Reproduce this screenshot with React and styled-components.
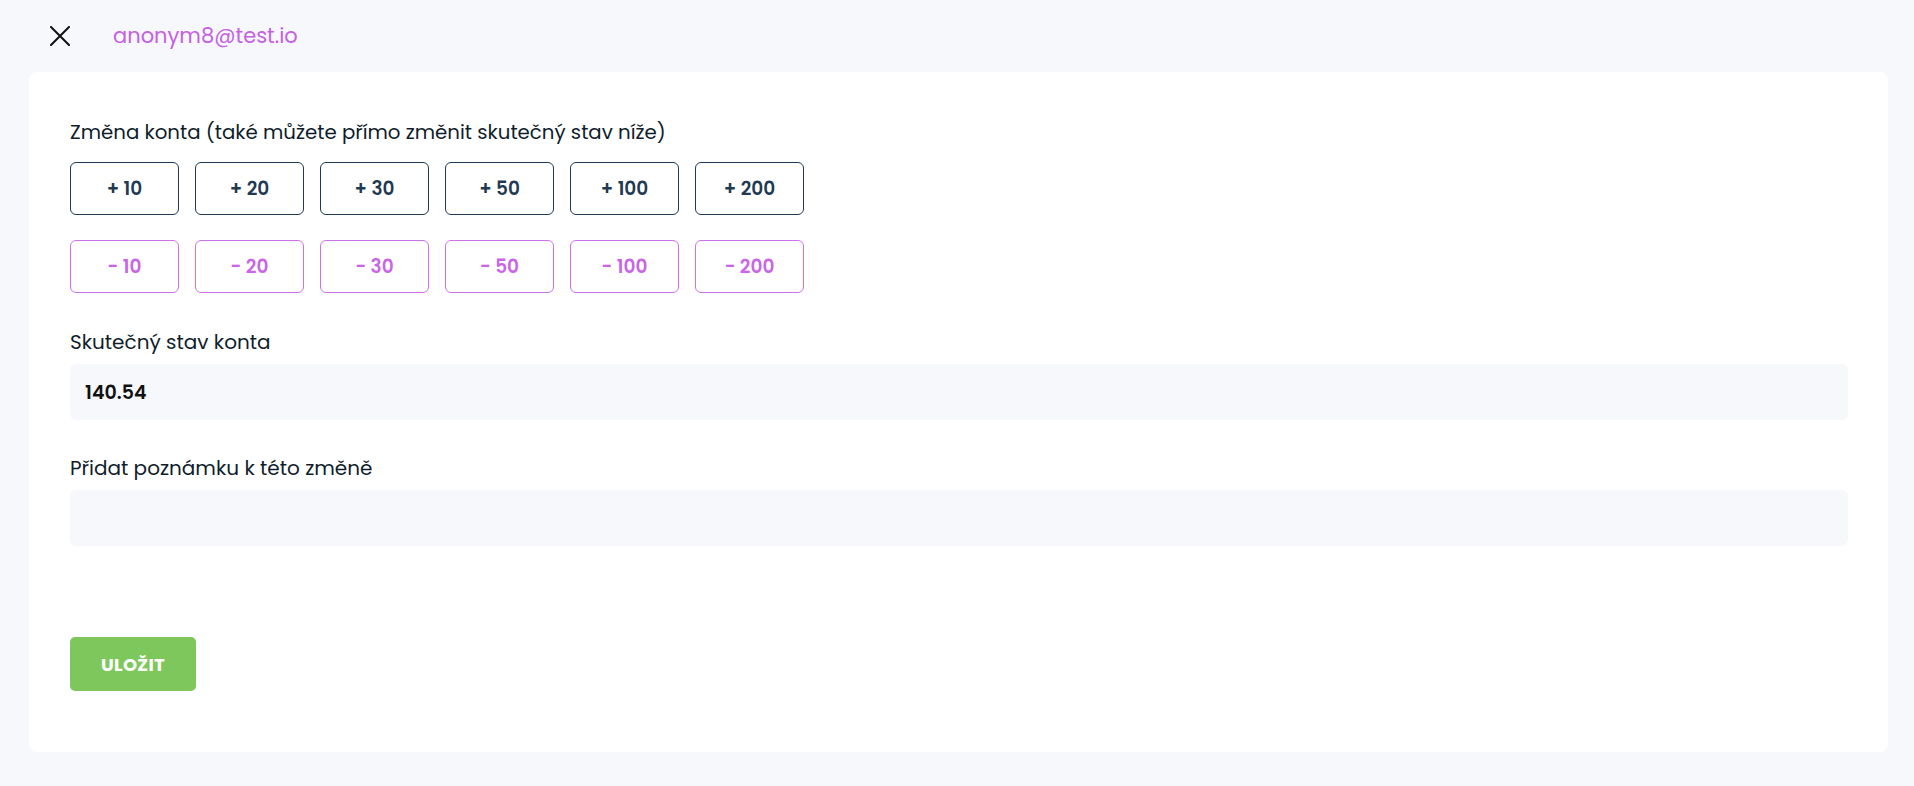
import React from 'react'
import styled, { createGlobalStyle } from 'styled-components';

const GlobalStyle = createGlobalStyle`
    * { box-sizing: border-box; }
    body {
        margin: 0;
        background: #f7f8fc;
        font-family: 'Poppins', 'Inter', 'Noto Sans', sans-serif;
        color: #101d2b;
    }
`;

const plusValues = [10, 20, 30, 50, 100, 200];

const CloseIcon = () => (
    <svg width="20" height="20" viewBox="0 0 20 20" fill="none">
        <path d="M1 1L19 19M19 1L1 19" stroke="#111" strokeWidth="2" strokeLinecap="round" />
    </svg>
)

const App = () => {
    return (
        <>
            <GlobalStyle />
            <Page>
                <Header>
                    <CloseButton aria-label="close">
                        <CloseIcon />
                    </CloseButton>
                    <Email>anonym8@test.io</Email>
                </Header>
                <Card>
                    <Title>Změna konta (také můžete přímo změnit skutečný stav níže)</Title>
                    <ButtonRow>
                        {plusValues.map(v => (
                            <AmountButton key={'p' + v}>+ {v}</AmountButton>
                        ))}
                    </ButtonRow>
                    <ButtonRow $minus>
                        {plusValues.map(v => (
                            <AmountButton key={'m' + v} $minus>- {v}</AmountButton>
                        ))}
                    </ButtonRow>
                    <Field $top={35}>
                        <Label>Skutečný stav konta</Label>
                        <Input defaultValue="140.54" $bold />
                    </Field>
                    <Field $top={34}>
                        <Label>Přidat poznámku k této změně</Label>
                        <Input defaultValue="" />
                    </Field>
                    <SaveButton>ULOŽIT</SaveButton>
                </Card>
            </Page>
        </>
    )
}

const Page = styled.div`
    min-height: 786px;
    padding: 0 26px 34px 29px;
`;

const Header = styled.header`
    height: 72px;
    display: flex;
    align-items: center;
    padding-left: 20px;
`;

const CloseButton = styled.button`
    width: 22px;
    height: 22px;
    padding: 0;
    border: none;
    background: none;
    display: flex;
    align-items: center;
    justify-content: center;
    cursor: pointer;
`;

const Email = styled.span`
    margin-left: 42px;
    font-size: 21px;
    color: #c561e2;
    line-height: 28px;
`;

const Card = styled.section`
    background: #fff;
    border-radius: 8px;
    padding: 46px 40px 61px 41px;
    display: flex;
    flex-direction: column;
    align-items: flex-start;
`;

const Title = styled.h3`
    margin: 0;
    font-size: 19.75px;
    font-weight: 400;
    line-height: 28px;
    color: #101d2b;
`;

const ButtonRow = styled.div`
    display: flex;
    gap: 16px;
    margin-top: ${p => (p.$minus ? '25px' : '16px')};
`;

const AmountButton = styled.button`
    width: 109px;
    height: 53px;
    border-radius: 6px;
    background: #fff;
    border: 1px solid ${p => (p.$minus ? '#cf72ea' : '#1f3a52')};
    color: ${p => (p.$minus ? '#c965e6' : '#1f3a52')};
    font-family: inherit;
    font-size: 18.5px;
    font-weight: 600;
    cursor: pointer;
`;

const Field = styled.div`
    width: 100%;
    margin-top: ${p => p.$top}px;
    display: flex;
    flex-direction: column;
    gap: 8px;
`;

const Label = styled.label`
    font-size: 20px;
    line-height: 28px;
    color: #101d2b;
`;

const Input = styled.input`
    width: 100%;
    height: 56px;
    border: none;
    outline: none;
    border-radius: 6px;
    background: #f7f8fc;
    padding: 0 15px;
    font-family: inherit;
    font-size: 19px;
    font-weight: ${p => (p.$bold ? 600 : 400)};
    color: #111;
`;

const SaveButton = styled.button`
    margin-top: 91px;
    width: 126px;
    height: 54px;
    border: none;
    border-radius: 5px;
    background: #7ec75c;
    color: #fff;
    font-family: inherit;
    font-size: 18px;
    font-weight: 700;
    letter-spacing: 0.3px;
    cursor: pointer;
`;

export default App
